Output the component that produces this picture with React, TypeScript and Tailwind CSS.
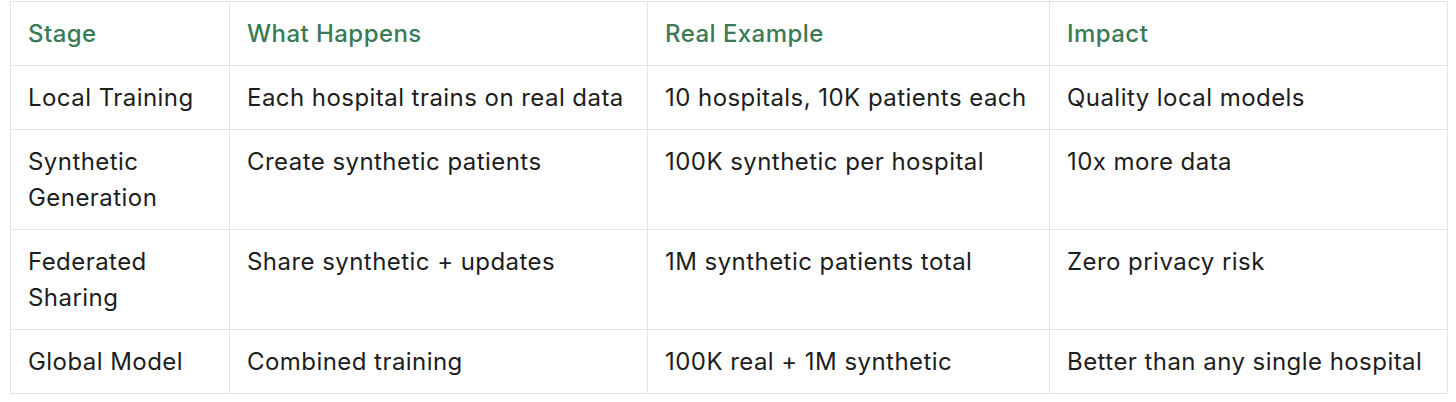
const headers = ["Stage", "What Happens", "Real Example", "Impact"];

const rows = [
  ["Local Training", "Each hospital trains on real data", "10 hospitals, 10K patients each", "Quality local models"],
  ["Synthetic Generation", "Create synthetic patients", "100K synthetic per hospital", "10x more data"],
  ["Federated Sharing", "Share synthetic + updates", "1M synthetic patients total", "Zero privacy risk"],
  ["Global Model", "Combined training", "100K real + 1M synthetic", "Better than any single hospital"],
];

const widths = ["w-[219px]", "w-[418px]", "w-[402px]", "w-[398px]"];

export default function App() {
  return (
    <div className="min-h-screen bg-white pl-[10px] pt-[1px] font-['Inter',sans-serif] text-[24px] leading-[36px] tracking-[0.45px] text-[#1d1d1d]">
      <table className="w-[1438px] table-fixed border-collapse">
        <colgroup>
          {widths.map((w) => (
            <col key={w} className={w} />
          ))}
        </colgroup>
        <thead>
          <tr>
            {headers.map((h) => (
              <th
                key={h}
                className="border border-[#e3e3e3] px-[17px] pt-[14px] pb-[13px] text-left align-top font-medium text-[#3b7a57]"
              >
                {h}
              </th>
            ))}
          </tr>
        </thead>
        <tbody>
          {rows.map((r) => (
            <tr key={r[0]}>
              {r.map((c, i) => (
                <td
                  key={i}
                  className="border border-[#e3e3e3] px-[17px] pt-[14px] pb-[13px] align-top font-normal"
                >
                  {c}
                </td>
              ))}
            </tr>
          ))}
        </tbody>
      </table>
    </div>
  );
}
